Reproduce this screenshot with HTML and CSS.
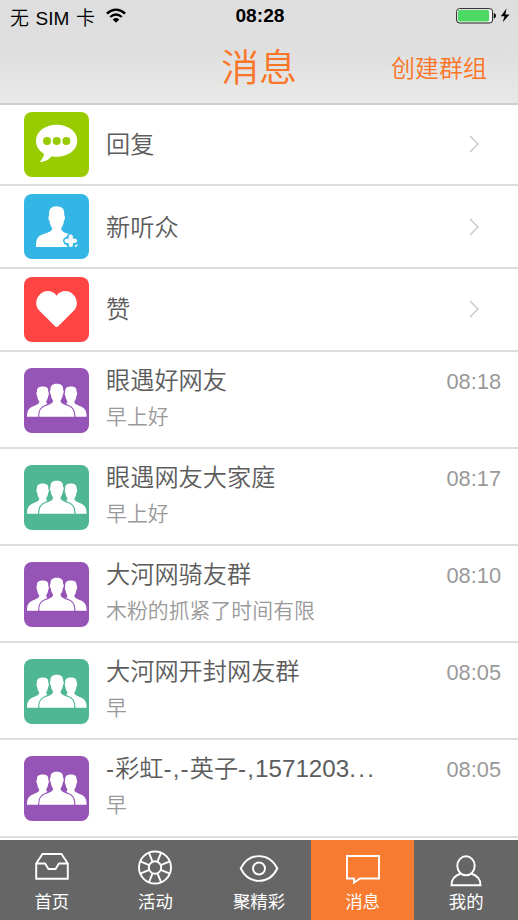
FILE: index.html
```html
<!DOCTYPE html>
<html lang="zh-CN">
<head>
<meta charset="utf-8">
<title>消息</title>
<link rel="stylesheet" href="styles.css">
</head>
<body>
<svg class="defs" width="0" height="0">
  <symbol id="group" viewBox="0 0 65 65">
    <g id="side">
      <path d="M3 48.700C3 42.500 4.800 40.500 8.500 38.600C13 36.500 15.200 36 15.300 33.500C13.900 31.700 13.400 29.800 13.200 28C12 26 12.300 24.300 13 23.500C12.800 19.500 15.500 18.600 18.700 18.600S24.600 19.500 24.400 23.500C25.100 24.300 25.400 26 24.200 28C24 29.800 23.300 31.700 22.200 33.500C22.400 36 25 37.200 29 38.600L30 48.700Z"/>
    </g>
    <use href="#side" transform="translate(65.600 0) scale(-1 1)"/>
    <path class="cut" d="M15.300 48.700C15.300 42 17.300 40 21.500 38.100C26.500 36 29 35.200 29.100 32.400C27.600 30.300 27 28.500 26.800 26.400C25.400 24.400 25.700 22.600 26.500 21.700C26.300 17.100 29.200 15.800 32.800 15.800S39.300 17.100 39.100 21.700C39.900 22.600 40.200 24.400 38.800 26.400C38.600 28.500 38 30.300 36.500 32.400C36.600 35.200 39.100 36 44.100 38.100C48.300 40 50.300 42 50.300 48.700Z"/>
    <path d="M15.300 48.700C15.300 42 17.300 40 21.500 38.100C26.500 36 29 35.200 29.100 32.400C27.600 30.300 27 28.500 26.800 26.400C25.400 24.400 25.700 22.600 26.500 21.700C26.300 17.100 29.200 15.800 32.800 15.800S39.300 17.100 39.100 21.700C39.900 22.600 40.200 24.400 38.800 26.400C38.600 28.500 38 30.300 36.500 32.400C36.600 35.200 39.100 36 44.100 38.100C48.300 40 50.300 42 50.300 48.700Z"/>
  </symbol>
</svg>
<div class="screen">
  <header class="header">
    <div class="status">
      <div class="carrier"><span>无 SIM 卡</span>
        <svg width="20" height="15" viewBox="0 0 20 15"><g fill="none" stroke="#000" stroke-width="2.300"><path d="M.9 5.500Q10 -2.200 19.100 5.500"/><path d="M4.200 9Q10 3.900 15.800 9"/></g><path d="M6.700 11.500Q10 8.700 13.300 11.500L10 14.800Z"/></svg>
      </div>
      <div class="clock">08:28</div>
      <div class="power">
        <svg width="54" height="16" viewBox="0 0 54 16"><rect x=".6" y=".6" width="36" height="14.400" rx="3" fill="#f4f4f4" stroke="#222"/><rect x="2" y="2" width="31" height="11.600" rx="1.500" fill="#4cd964"/><path d="M37.800 5Q40 5.500 40 7.800T37.800 10.600Z"/><path d="M50.500.6L44.800 8.300H48.500L46.700 14.300L53.500 6.500H49.300Z"/></svg>
      </div>
    </div>
    <div class="nav"><span></span><h1>消息</h1><a class="create">创建群组</a></div>
  </header>

  <main class="list">
    <div class="row entry">
      <svg class="icon green" viewBox="0 0 65 65"><path d="M32.700 12.700C44.300 12.700 53.300 19.500 53.300 28.700S44.300 44.700 32.700 44.700Q30 44.700 27.500 44.200C24.500 48.300 19.500 50 15.500 50Q19.500 46.500 20 41.800C14.700 38.700 12 34.200 12 28.700C12 19.500 21.200 12.700 32.700 12.700Z"/><g class="cut"><circle cx="23" cy="29" r="4"/><circle cx="32.700" cy="29" r="4"/><circle cx="42.400" cy="29" r="4"/></g></svg>
      <span class="name">回复</span><svg class="arrow" viewBox="0 0 10 18"><path d="M1 1L9 9L1 17"/></svg>
    </div>
    <div class="row entry">
      <svg class="icon blue" viewBox="0 0 65 65"><path d="M12 53C11.800 44.500 14 42 19 40.200C24.500 38.200 28.300 37.500 28.200 34.200C26.500 31.800 25.700 29.800 25.500 27C24 25 24.200 22.500 25.200 21C24.500 15 27.700 12.300 32.700 12.300S40.900 15 40.200 21C41.200 22.500 41.400 25 39.900 27C39.700 29.800 38.900 31.800 37.200 34.200C37.100 37.500 40.500 38.400 44.800 40.100Q42.800 41 42.500 42.800Q39 44 39 46.900Q39.500 50 42.200 50.800Q42.800 52.500 44 53Z"/><path class="plus" d="M46.800 42.600V51M42.600 46.800H51"/><path d="M50.500 52L53.200 50L53.600 51Q53.300 53 51 53Z"/></svg>
      <span class="name">新听众</span><svg class="arrow" viewBox="0 0 10 18"><path d="M1 1L9 9L1 17"/></svg>
    </div>
    <div class="row entry">
      <svg class="icon red" viewBox="0 0 65 65"><path d="M32.600 18.700C36 13.500 43 12.600 48 16.400C53.200 20.300 54.800 28.200 50 33.500L34.200 49.300Q32.600 50.800 31 49.300L15.200 33.500C10.400 28.200 11.800 20.300 17 16.400C22.200 12.600 29.200 13.500 32.600 18.700Z"/></svg>
      <span class="name">赞</span><svg class="arrow" viewBox="0 0 10 18"><path d="M1 1L9 9L1 17"/></svg>
    </div>
    <div class="row chat">
      <svg class="icon purple"><use href="#group"/></svg>
      <div class="text"><div class="name">眼遇好网友</div><div class="last">早上好</div></div><time>08:18</time>
    </div>
    <div class="row chat">
      <svg class="icon teal"><use href="#group"/></svg>
      <div class="text"><div class="name">眼遇网友大家庭</div><div class="last">早上好</div></div><time>08:17</time>
    </div>
    <div class="row chat">
      <svg class="icon purple"><use href="#group"/></svg>
      <div class="text"><div class="name">大河网骑友群</div><div class="last">木粉的抓紧了时间有限</div></div><time>08:10</time>
    </div>
    <div class="row chat">
      <svg class="icon teal"><use href="#group"/></svg>
      <div class="text"><div class="name">大河网开封网友群</div><div class="last">早</div></div><time>08:05</time>
    </div>
    <div class="row chat">
      <svg class="icon purple"><use href="#group"/></svg>
      <div class="text"><div class="name"><span class="wide">-</span>彩虹<span class="wide">-,-</span>英子<span class="wide">-,</span>1571203<span class="dots">...</span></div><div class="last">早</div></div><time>08:05</time>
    </div>
  </main>

  <nav class="tabs">
    <a class="tab"><svg viewBox="0 0 40 36"><path d="M4.200 13.500L10.500 4H29.500L35.800 13.500V28.700H4.200ZM4.200 13.500H13L16.500 19H23.500L27 13.500H35.800"/></svg><span>首页</span></a>
    <a class="tab"><svg viewBox="0 0 40 36"><circle cx="20" cy="17.500" r="16"/><circle cx="20" cy="17.500" r="6.200"/><path d="M22.400 11.800L26.100 2.700M25.700 15.100L34.800 11.400M25.700 19.900L34.800 23.600M22.400 23.200L26.100 32.300M17.600 23.200L13.900 32.300M14.300 19.900L5.200 23.600M14.300 15.100L5.200 11.400M17.600 11.800L13.900 2.700"/></svg><span>活动</span></a>
    <a class="tab"><svg viewBox="0 0 40 36"><path d="M1.700 18.500C10 2 30 2 38.300 18.500C30 35 10 35 1.700 18.500Z"/><circle cx="20" cy="18.500" r="6"/></svg><span>聚精彩</span></a>
    <a class="tab active"><svg viewBox="0 0 40 36"><path d="M4 6H36V28.500H17L11 32.700V28.500H4Z"/></svg><span>消息</span></a>
    <a class="tab"><svg viewBox="0 0 40 36"><ellipse cx="20" cy="15.800" rx="8.700" ry="9.500"/><path d="M15 23.500C9 25.300 5.500 29 5.500 35.200H34.500C34.500 29 31 25.300 25 23.500"/></svg><span>我的</span></a>
  </nav>
</div>
</body>
</html>
```
FILE: styles.css
```css
* { box-sizing: border-box; }
body {
  margin: 0;
  background: #fff;
  font-family: "Liberation Sans", "Noto Sans CJK SC", sans-serif;
  font-weight: 350;
}
.defs { position: absolute; }
.screen { display: flex; flex-direction: column; width: 518px; height: 920px; overflow: hidden; }

.header {
  flex: none;
  height: 104.700px;
  border-bottom: 2px solid #cdcdcd;
  background: linear-gradient(#dedede 0%, #dfdfdf 50%, #e9e9e8 100%);
}
.status {
  display: grid;
  grid-template-columns: 1fr auto 1fr;
  align-items: center;
  height: 32px;
  padding: 0 8px 0 10px;
  font-size: 18.500px;
  color: #000;
}
.carrier { display: flex; align-items: center; gap: 11px; white-space: nowrap; }
.carrier span { font-size: 19px; word-spacing: 1.300px; }
.carrier svg { margin-top: -2px; }
.clock { font-weight: 700; font-size: 19.200px; }
.power { display: flex; justify-content: flex-end; }
.nav {
  display: grid;
  grid-template-columns: 1fr auto 1fr;
  align-items: center;
  height: 72px;
  padding: 0 31px;
  color: #fb7527;
}
.nav h1 { margin: 0; font-size: 38px; font-weight: inherit; line-height: 72px; }
.create { justify-self: end; margin-top: -3px; font-size: 24px; }

.list { flex: 1; min-height: 0; margin-top: -.8px; }
.row {
  display: flex;
  padding-left: 24px;
  padding-right: 17px;
  border-bottom: 2px solid #dadcde;
}
.entry { height: 82.600px; align-items: center; }
.chat { height: 97.200px; padding-top: 16px; }
.icon {
  flex: none;
  width: 65px;
  height: 65px;
  margin-right: 17px;
  border-radius: 8px;
  background: var(--tone);
  fill: #fff;
}
.green { --tone: #99cc00; }
.blue { --tone: #33b5e5; }
.red { --tone: #ff4444; }
.purple { --tone: #9554b6; }
.teal { --tone: #50b794; }
.cut { fill: var(--tone); stroke: var(--tone); stroke-width: 2.400; }
.green .cut { stroke: none; }
.plus { fill: none; stroke: #fff; stroke-width: 4.200; stroke-linecap: round; }
.name { font-size: 24.200px; line-height: 30px; color: #5c5c5c; white-space: nowrap; }
.entry .name { flex: 1; padding-top: 2px; }
.arrow { width: 10px; height: 18px; margin-right: 22px; fill: none; stroke: #c4c4c4; stroke-width: 1.300; }
.text { flex: 1; margin-top: -2px; }
.wide { letter-spacing: 1.100px; }
.dots { letter-spacing: 2.300px; }
.last { margin-top: 7px; font-size: 20.900px; line-height: 28px; color: #999; }
time { font-size: 21.800px; line-height: 28px; color: #999; }

.tabs { flex: none; display: flex; height: 80px; background: #666; }
.tab { flex: 1; display: flex; flex-direction: column; align-items: center; padding-top: 10px; color: #fff; font-size: 17.400px; line-height: 26px; font-weight: 400; }
.tab svg { width: 40px; height: 36px; margin-bottom: 3px; fill: none; stroke: #fff; stroke-width: 1.900; overflow: visible; }
.active { background: #f77b30; }
```
